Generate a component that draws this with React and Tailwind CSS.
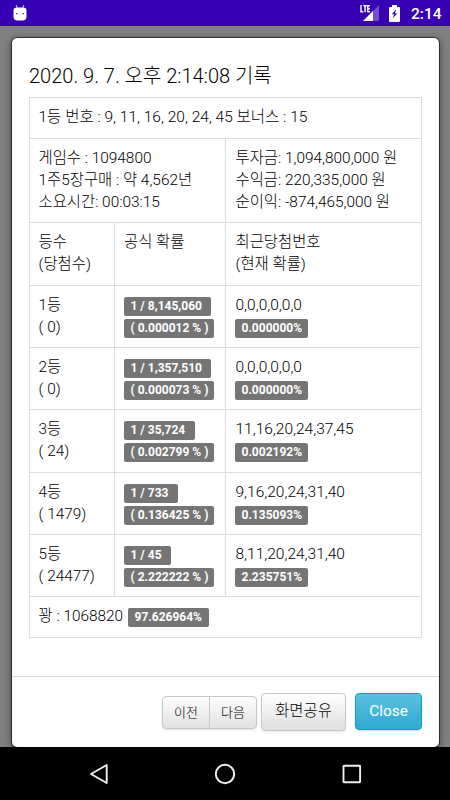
import React from "react";

const ranks = [
  { rank: "1등", count: "( 0)", odds: "1 / 8,145,060", oddsWidth: "w-[87px]", percent: "( 0.000012 % )", numbers: "0,0,0,0,0,0", current: "0.000000%", height: "h-[62px]" },
  { rank: "2등", count: "( 0)", odds: "1 / 1,357,510", oddsWidth: "w-[87px]", percent: "( 0.000073 % )", numbers: "0,0,0,0,0,0", current: "0.000000%", height: "h-[62px]" },
  { rank: "3등", count: "( 24)", odds: "1 / 35,724", oddsWidth: "w-[71px]", percent: "( 0.002799 % )", numbers: "11,16,20,24,37,45", current: "0.002192%", height: "h-[63px]" },
  { rank: "4등", count: "( 1479)", odds: "1 / 733", oddsWidth: "w-[54px]", percent: "( 0.136425 % )", numbers: "9,16,20,24,31,40", current: "0.135093%", height: "h-[62px]" },
  { rank: "5등", count: "( 24477)", odds: "1 / 45", oddsWidth: "w-[47px]", percent: "( 2.222222 % )", numbers: "8,11,20,24,31,40", current: "2.235751%", height: "h-[62px]" },
];

function Label({ className = "", children }) {
  return (
    <span
      className={`block h-[19.5px] rounded-[2px] bg-[#757575] pl-[6.5px] text-[12px] leading-[19px] font-bold whitespace-pre text-white ${className}`}
    >
      {children}
    </span>
  );
}

function StatusBar() {
  return (
    <div className="flex h-[26px] shrink-0 items-center bg-[#3700b3] pl-[13px] pr-[9px] text-white">
      <svg width="14" height="17" viewBox="0 0 14 17" className="-mt-[2px]">
        <path d="M3.2 1l1 3M10.8 1l-1 3" stroke="#d9ccf5" strokeWidth="1" />
        <path d="M.5 6.5Q.5 3.5 4 3.5h6q3.5 0 3.5 3v6q0 4-4 4h-5q-4 0-4-4z" fill="#fff" />
        <circle cx="3.8" cy="9.8" r=".7" fill="#3700b3" />
        <circle cx="10.2" cy="9.8" r=".7" fill="#3700b3" />
      </svg>
      <svg width="21" height="18" viewBox="0 0 21 18" className="mr-px ml-auto">
        <path d="M20 1v16H4z" fill="#fff" fillOpacity=".3" />
        <path d="M14 7v10H4z" fill="#fff" />
        <rect x="0" y="0" width="11.5" height="9" fill="#3700b3" />
        <path d="M2 1v6.7h2.3M4.4 1.7h3.4M6.1 1.7v6.6M11 1.7H8.8v6H11M8.8 4.7h2" fill="none" stroke="#fff" strokeWidth="1.4" />
      </svg>
      <svg width="11" height="17" viewBox="0 0 11 17" className="ml-[8px]">
        <path d="M3 0h5v2h2q1 0 1 1v13q0 1-1 1H1q-1 0-1-1V3q0-1 1-1h2z" fill="#fff" />
        <path d="M7 4.2L2.8 9.2h2.5L3.5 13.6l4.9-5.2H5.9z" fill="#3700b3" />
      </svg>
      <span className="ml-[11px] w-[30px] pt-px text-[15.5px] leading-[26px] font-medium whitespace-nowrap">2:14</span>
    </div>
  );
}

function NavBar() {
  return (
    <div className="flex h-[53px] shrink-0 items-center justify-between bg-black pl-[88px] pr-[88px]">
      <svg width="20" height="22" viewBox="0 0 20 22" fill="none" stroke="#eee" strokeWidth="1.9" strokeLinejoin="round">
        <path d="M18.7 2v18L3 11z" />
      </svg>
      <svg width="22" height="22" viewBox="0 0 22 22" fill="none" stroke="#eee" strokeWidth="2">
        <circle cx="11" cy="11" r="9.2" />
      </svg>
      <svg width="20" height="20" viewBox="0 0 20 20" fill="none" stroke="#eee" strokeWidth="1.9">
        <rect x="1.5" y="1.7" width="16.6" height="16.6" rx=".5" />
      </svg>
    </div>
  );
}

function RecordTable() {
  return (
    <div className="w-[393px] border border-[#ddd] text-[15.4px] leading-[22px] font-light whitespace-nowrap text-black">
      <div className="h-[40px] pt-[8px] pl-[8.5px] text-[15.5px]">1등 번호 : 9, 11, 16, 20, 24, 45 보너스 : 15</div>

      <div className="flex h-[84px] border-t border-[#ddd]">
        <div className="w-[196px] border-r border-[#ddd] pt-[8px] pl-[8.5px]">
          <p>게임수 : 1094800</p>
          <p>1주5장구매 : 약 4,562년</p>
          <p>소요시간: 00:03:15</p>
        </div>
        <div className="pt-[8px] pl-[9.5px]">
          <p>투자금: 1,094,800,000 원</p>
          <p>수익금: 220,335,000 원</p>
          <p>순이익: -874,465,000 원</p>
        </div>
      </div>

      <div className="flex h-[63px] border-t border-[#ddd]">
        <div className="w-[85px] border-r border-[#ddd] pt-[8px] pl-[8.5px]">
          <p>등수</p>
          <p>(당첨수)</p>
        </div>
        <div className="w-[111px] border-r border-[#ddd] pt-[8px] pl-[9px]">공식 확률</div>
        <div className="pt-[8px] pl-[9.5px]">
          <p>최근당첨번호</p>
          <p>(현재 확률)</p>
        </div>
      </div>

      {ranks.map((r) => (
        <div key={r.rank} className={`flex border-t border-[#ddd] ${r.height}`}>
          <div className="w-[85px] border-r border-[#ddd] pt-[8px] pl-[8.5px]">
            <p>{r.rank}</p>
            <p>{r.count}</p>
          </div>
          <div className="flex w-[111px] flex-col gap-[2.5px] border-r border-[#ddd] pt-[10.5px] pl-[9px]">
            <Label className={r.oddsWidth}>{r.odds}</Label>
            <Label className="w-[90px]">{r.percent}</Label>
          </div>
          <div className="pt-[8px] pl-[9.5px]">
            <p className="text-[15.5px]">{r.numbers}</p>
            <Label className="mt-[2.5px] -ml-[0.5px] w-[73px]">{r.current}</Label>
          </div>
        </div>
      ))}

      <div className="flex h-[41px] border-t border-[#ddd] pl-[8.5px]">
        <span className="w-[89.5px] pt-[8px]">꽝 : 1068820</span>
        <Label className="mt-[10.5px] w-[81px]">97.626964%</Label>
      </div>
    </div>
  );
}

export default function App() {
  return (
    <div className="flex h-[800px] w-[450px] flex-col overflow-hidden bg-[#808080] font-['Roboto','Noto_Sans_CJK_KR',sans-serif]">
      <StatusBar />

      <div className="flex flex-1 flex-col overflow-hidden px-[12px] pt-[12px]">
        <div className="flex h-[709px] w-[427px] flex-col rounded-[5px] bg-white shadow-[0_0_0_1px_rgba(0,0,0,0.55),0_2px_8px_rgba(0,0,0,0.55)]">
          <div className="flex-1 pl-[17px]">
            <h3 className="pt-[24px] pb-[7px] text-[20px] leading-[28px] font-light whitespace-nowrap text-black">
              2020. 9. 7. 오후 2:14:08 기록
            </h3>
            <RecordTable />
          </div>

          <div className="flex h-[71px] justify-end border-t border-[#ddd] pt-[16px] pr-[17px] font-light text-black">
            <div className="mt-[3px] flex h-[33px] rounded-[4px] border border-[#c8c8c8] bg-linear-to-b from-white to-[#e1e1e1] text-[13px] shadow-[0_1px_2px_rgba(0,0,0,0.12)]">
              <button className="w-[46px]">이전</button>
              <button className="w-[47px] border-l border-[#c8c8c8]">다음</button>
            </div>
            <button className="ml-[4px] h-[38px] w-[85px] rounded-[4px] border border-[#c8c8c8] bg-linear-to-b from-white to-[#dfdfdf] text-[15.4px] shadow-[0_1px_2px_rgba(0,0,0,0.12)]">
              화면공유
            </button>
            <button className="ml-[9px] h-[37px] w-[67px] rounded-[4px] border border-[#139bc4] bg-linear-to-b from-[#5bc0de] to-[#2aabd2] text-[15.4px] font-normal text-white shadow-[0_1px_2px_rgba(0,0,0,0.15)]">
              Close
            </button>
          </div>
        </div>
      </div>

      <NavBar />
    </div>
  );
}
